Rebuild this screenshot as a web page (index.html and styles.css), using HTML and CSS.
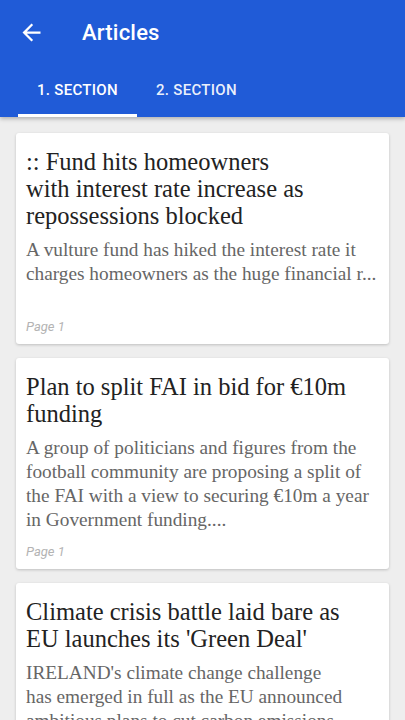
FILE: index.html
```html
<!DOCTYPE html>
<html lang="en">
<head>
    <meta charset="UTF-8">
    <meta name="viewport" content="width=device-width, initial-scale=1.0">
    <title>Articles</title>
    <link rel="stylesheet" href="styles.css">
</head>
<body>
    <header class="appbar">
        <div class="toolbar">
            <button class="back" aria-label="Back">
                <svg viewBox="0 0 24 24" width="27" height="27"><path fill="#fff" d="M20 11H7.83l5.59-5.59L12 4l-8 8 8 8 1.41-1.41L7.83 13H20v-2z"/></svg>
            </button>
            <h1>Articles</h1>
        </div>
        <nav class="tabs">
            <a class="tab active">1. Section</a>
            <a class="tab">2. Section</a>
        </nav>
    </header>
    <main class="list">
        <article class="card">
            <h2>:: Fund hits homeowners<br>with interest rate increase as repossessions blocked</h2>
            <p class="clamp">A vulture fund has hiked the interest rate it charges homeowners as the huge financial r...</p>
            <footer>Page 1</footer>
        </article>
        <article class="card">
            <h2>Plan to split FAI in bid for €10m funding</h2>
            <p>A group of politicians and figures from the football community are proposing a split of the FAI with a view to securing €10m a year in Government funding....</p>
            <footer>Page 1</footer>
        </article>
        <article class="card">
            <h2>Climate crisis battle laid bare as<br>EU launches its 'Green Deal'</h2>
            <p>IRELAND's climate change challenge<br>has emerged in full as the EU announced ambitious plans to cut carbon emissions...</p>
            <footer>Page 1</footer>
        </article>
    </main>
</body>
</html>
```

FILE: styles.css
```css
body {
    margin: 0;
    font-family: Roboto, "Liberation Sans", sans-serif;
    background: #eeeeee;
    height: 720px;
    overflow: hidden;
}

.appbar {
    background: #205bd7;
    color: #fff;
    box-shadow: 0 2px 4px rgba(0, 0, 0, 0.25);
    position: relative;
    z-index: 1;
}

.toolbar {
    display: flex;
    align-items: center;
    height: 65px;
}
.back {
    display: flex;
    align-items: center;
    justify-content: center;
    width: 27px;
    height: 27px;
    margin-left: 18px;
    padding: 0;
    border: 0;
    background: none;
}
.toolbar h1 {
    margin: 0 0 0 37px;
    font-size: 22px;
    font-weight: 500;
    letter-spacing: 0.2px;
}

.tabs {
    display: flex;
    height: 52px;
    padding-left: 18px;
}
.tab {
    display: flex;
    align-items: center;
    padding: 0 19px;
    font-size: 15px;
    font-weight: 500;
    letter-spacing: 0.3px;
    text-transform: uppercase;
    border-bottom: 3px solid transparent;
    box-sizing: border-box;
    color: rgba(255, 255, 255, 0.92);
}
.tab.active {
    color: #fff;
    border-bottom-color: #fff;
}

.list {
    display: flex;
    flex-direction: column;
    gap: 14px;
    padding: 16px 16px 0;
}
.card {
    display: flex;
    flex-direction: column;
    flex-shrink: 0;
    height: 211px;
    box-sizing: border-box;
    padding: 15px 8px 8px 10px;
    background: #fff;
    border-radius: 3px;
    box-shadow: 0 1px 3px rgba(0, 0, 0, 0.2);
}
.card h2 {
    margin: 0;
    font-family: "Liberation Serif", serif;
    font-size: 24.5px;
    font-weight: 400;
    line-height: 27px;
    color: #222;
}
.card p {
    margin: 9px 0 0;
    font-family: "Liberation Serif", serif;
    font-size: 19.3px;
    line-height: 24px;
    color: #666;
}
.card p.clamp {
    display: -webkit-box;
    -webkit-box-orient: vertical;
    -webkit-line-clamp: 2;
    overflow: hidden;
}
.card footer {
    margin-top: auto;
    font-size: 13px;
    font-style: italic;
    line-height: 18px;
    color: #b3b3b3;
}
```
